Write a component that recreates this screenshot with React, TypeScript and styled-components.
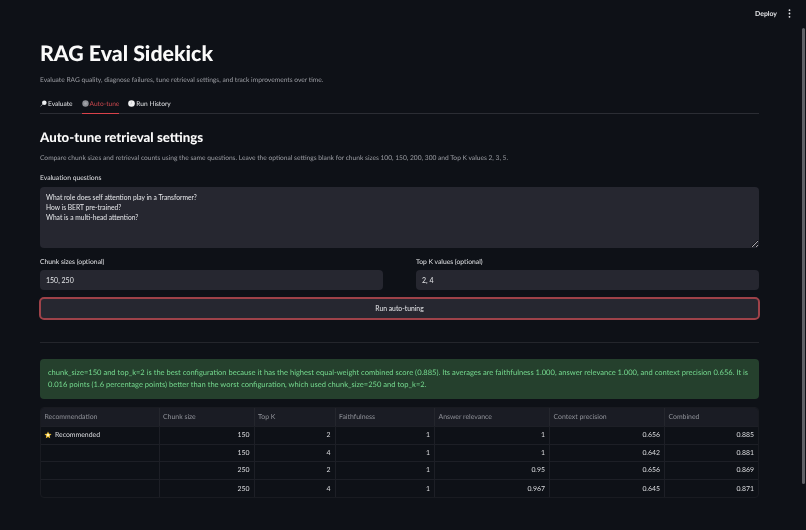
import React from "react"
import styled, { createGlobalStyle } from "styled-components"

const GlobalStyle = createGlobalStyle`
  html, body {
    margin: 0;
    padding: 0;
    height: 100%;
    background: #0e1117;
    overflow: hidden;
  }
  * {
    box-sizing: border-box;
  }
`

const Page = styled.div`
  position: relative;
  width: 806px;
  height: 530px;
  overflow: hidden;
  background: #0e1117;
  color: #fafafa;
  font-family: "Lato", "Noto Sans", sans-serif;
  text-rendering: geometricPrecision;
  filter: blur(0.3px);
`

const TopBar = styled.div`
  height: 27px;
  display: flex;
  align-items: center;
  justify-content: flex-end;
  gap: 11px;
  padding-right: 15px;
`

const DeployLabel = styled.span`
  font-size: 6.9px;
  font-weight: 700;
  color: #e4e5e8;
`

const Main = styled.div`
  width: 719px;
  margin-left: 40px;
  display: flex;
  flex-direction: column;
`

const Title = styled.h1`
  margin: 11px 0 0;
  height: 30px;
  line-height: 30px;
  font-size: 21.3px;
  font-weight: 900;
  color: #fafafa;
`

const Caption = styled.p`
  margin: 0;
  height: 12px;
  line-height: 12px;
  font-size: 6.65px;
  color: #9b9da3;
  white-space: nowrap;
`

const Subtitle = styled(Caption)`
  margin-top: 6px;
`

const TabBar = styled.div`
  margin-top: 8px;
  height: 20px;
  display: flex;
  gap: 9px;
  border-bottom: 1px solid #2b2d34;
`

const Tab = styled.div<{ $active?: boolean }>`
  height: 20px;
  display: flex;
  align-items: center;
  gap: 1px;
  font-size: 6.6px;
  color: ${(p) => (p.$active ? "#c9474d" : "#e3e4e7")};
  border-bottom: 1px solid ${(p) => (p.$active ? "#d9424a" : "transparent")};
`

const SectionTitle = styled.h2`
  margin: 12.5px 0 0;
  height: 20px;
  line-height: 20px;
  font-size: 13.25px;
  font-weight: 900;
  color: #fafafa;
`

const SectionCaption = styled(Caption)`
  margin-top: 5.5px;
`

const FieldLabel = styled.label`
  display: block;
  height: 11px;
  line-height: 11px;
  font-size: 6.75px;
  color: #e0e1e4;
`

const QuestionsLabel = styled(FieldLabel)`
  margin-top: 9px;
`

const Questions = styled.textarea`
  display: block;
  width: 100%;
  height: 61px;
  margin-top: 3px;
  padding: 6px;
  border: none;
  border-radius: 4px;
  outline: none;
  background: #262730;
  color: #e6e7ea;
  font-family: inherit;
  font-size: 6.7px;
  line-height: 9.9px;
`

const FieldRow = styled.div`
  margin-top: 9px;
  display: grid;
  grid-template-columns: 343px 343px;
  column-gap: 33px;
`

const TextField = styled.input`
  display: block;
  width: 100%;
  height: 20px;
  margin-top: 2px;
  padding: 0 6px;
  border: none;
  border-radius: 4px;
  outline: none;
  background: #262730;
  color: #e6e7ea;
  font-family: inherit;
  font-size: 7px;
`

const RunButton = styled.button`
  display: block;
  width: 721px;
  height: 22.5px;
  margin: 7px 0 0 -1px;
  padding: 0;
  border: 2px solid #9e4249;
  border-radius: 5px;
  background: #262730;
  color: #e6e7ea;
  font-family: inherit;
  font-size: 6.8px;
`

const Rule = styled.hr`
  width: 100%;
  height: 1px;
  margin: 22.5px 0 0;
  border: none;
  background: #24262c;
`

const SuccessBox = styled.div`
  margin-top: 16px;
  height: 40px;
  padding: 8px;
  border-radius: 4px;
  background: #25402d;
  color: #74d88e;
  font-size: 7.55px;
  line-height: 12.4px;
`

const Table = styled.div`
  margin-top: 8px;
  border-radius: 4px;
  overflow: hidden;
  border: 1px solid #191b21;
`

const TableRow = styled.div<{ $head?: boolean }>`
  display: grid;
  grid-template-columns: 118.5px 95px 81px 99.5px 115px 115px 1fr;
  height: ${(p) => (p.$head ? "19px" : "17.6px")};
  background: ${(p) => (p.$head ? "#1a1c24" : "transparent")};
  border-bottom: 1px solid #1d1f26;
  &:last-child {
    border-bottom: none;
  }
`

const HeadCell = styled.div`
  display: flex;
  align-items: center;
  padding-left: 3.5px;
  font-size: 6.9px;
  color: #8f9198;
  border-right: 1px solid #24262d;
  &:last-child {
    border-right: none;
  }
`

const BodyCell = styled.div<{ $text?: boolean }>`
  display: flex;
  align-items: center;
  justify-content: ${(p) => (p.$text ? "flex-start" : "flex-end")};
  gap: 3px;
  padding: 0 4px 0 ${(p) => (p.$text ? "3px" : "4px")};
  font-size: 6.9px;
  color: #dcdde0;
  border-right: 1px solid #1d1f26;
  &:last-child {
    border-right: none;
  }
`

const ScrollThumb = styled.div`
  position: absolute;
  top: 28px;
  right: 1px;
  width: 3px;
  height: 456px;
  border-radius: 2px;
  background: #5f6166;
`

const KebabIcon = () => (
  <svg width="3" height="9" viewBox="0 0 3 9" fill="#e4e5e8">
    <circle cx="1.5" cy="1.2" r="0.9" />
    <circle cx="1.5" cy="4.5" r="0.9" />
    <circle cx="1.5" cy="7.8" r="0.9" />
  </svg>
)

const SearchIcon = () => (
  <svg width="7" height="7" viewBox="0 0 7 7">
    <line x1="0.6" y1="6.4" x2="2.8" y2="4" stroke="#8d8f94" strokeWidth="0.9" />
    <circle cx="4.3" cy="2.7" r="2.3" fill="#eceef0" />
  </svg>
)

const GearIcon = () => (
  <svg width="7" height="7" viewBox="0 0 7 7">
    <circle cx="3.5" cy="3.5" r="3.2" fill="#8e9096" />
    <circle cx="3.5" cy="3.5" r="1.2" fill="#a5a7ac" />
  </svg>
)

const ClockIcon = () => (
  <svg width="7" height="7" viewBox="0 0 7 7">
    <circle cx="3.5" cy="3.5" r="3.3" fill="#eff0f1" />
    <path d="M3.5 1.6V3.6L2.2 4.2" stroke="#b5b6ba" strokeWidth="0.5" fill="none" />
  </svg>
)

const StarIcon = () => (
  <svg width="8" height="8" viewBox="0 0 24 24">
    <path d="M12 1.5l3.2 6.9 7.5.9-5.6 5.1 1.5 7.4L12 18.1l-6.6 3.7 1.5-7.4L1.3 9.3l7.5-.9z" fill="#f4c534" />
    <circle cx="12" cy="12" r="4" fill="#fff2c0" />
  </svg>
)

const headers = ["Recommendation", "Chunk size", "Top K", "Faithfulness", "Answer relevance", "Context precision", "Combined"]

const rows = [
  { recommended: true, values: ["150", "2", "1", "1", "0.656", "0.885"] },
  { recommended: false, values: ["150", "4", "1", "1", "0.642", "0.881"] },
  { recommended: false, values: ["250", "2", "1", "0.95", "0.656", "0.869"] },
  { recommended: false, values: ["250", "4", "1", "0.967", "0.645", "0.871"] },
]

export default function App() {
  return (
    <Page>
      <GlobalStyle />
      <TopBar>
        <DeployLabel>Deploy</DeployLabel>
        <KebabIcon />
      </TopBar>
      <Main>
        <Title>RAG Eval Sidekick</Title>
        <Subtitle>Evaluate RAG quality, diagnose failures, tune retrieval settings, and track improvements over time.</Subtitle>
        <TabBar>
          <Tab><SearchIcon />Evaluate</Tab>
          <Tab $active><GearIcon />Auto-tune</Tab>
          <Tab><ClockIcon />Run History</Tab>
        </TabBar>
        <SectionTitle>Auto-tune retrieval settings</SectionTitle>
        <SectionCaption>Compare chunk sizes and retrieval counts using the same questions. Leave the optional settings blank for chunk sizes 100, 150, 200, 300 and Top K values 2, 3, 5.</SectionCaption>
        <QuestionsLabel>Evaluation questions</QuestionsLabel>
        <Questions readOnly defaultValue={"What role does self attention play in a Transformer?\nHow is BERT pre-trained?\nWhat is a multi-head attention?"} />
        <FieldRow>
          <div>
            <FieldLabel>Chunk sizes (optional)</FieldLabel>
            <TextField readOnly defaultValue="150, 250" />
          </div>
          <div>
            <FieldLabel>Top K values (optional)</FieldLabel>
            <TextField readOnly defaultValue="2, 4" />
          </div>
        </FieldRow>
        <RunButton>Run auto-tuning</RunButton>
        <Rule />
        <SuccessBox>
          chunk_size=150 and top_k=2 is the best configuration because it has the highest equal-weight combined score (0.885). Its averages are faithfulness 1.000, answer relevance 1.000, and context precision 0.656. It is 0.016 points (1.6 percentage points) better than the worst configuration, which used chunk_size=250 and top_k=2.
        </SuccessBox>
        <Table>
          <TableRow $head>
            {headers.map((h) => <HeadCell key={h}>{h}</HeadCell>)}
          </TableRow>
          {rows.map((r, i) => (
            <TableRow key={i}>
              <BodyCell $text>
                {r.recommended && <><StarIcon />Recommended</>}
              </BodyCell>
              {r.values.map((v, j) => <BodyCell key={j}>{v}</BodyCell>)}
            </TableRow>
          ))}
        </Table>
      </Main>
      <ScrollThumb />
    </Page>
  )
}
